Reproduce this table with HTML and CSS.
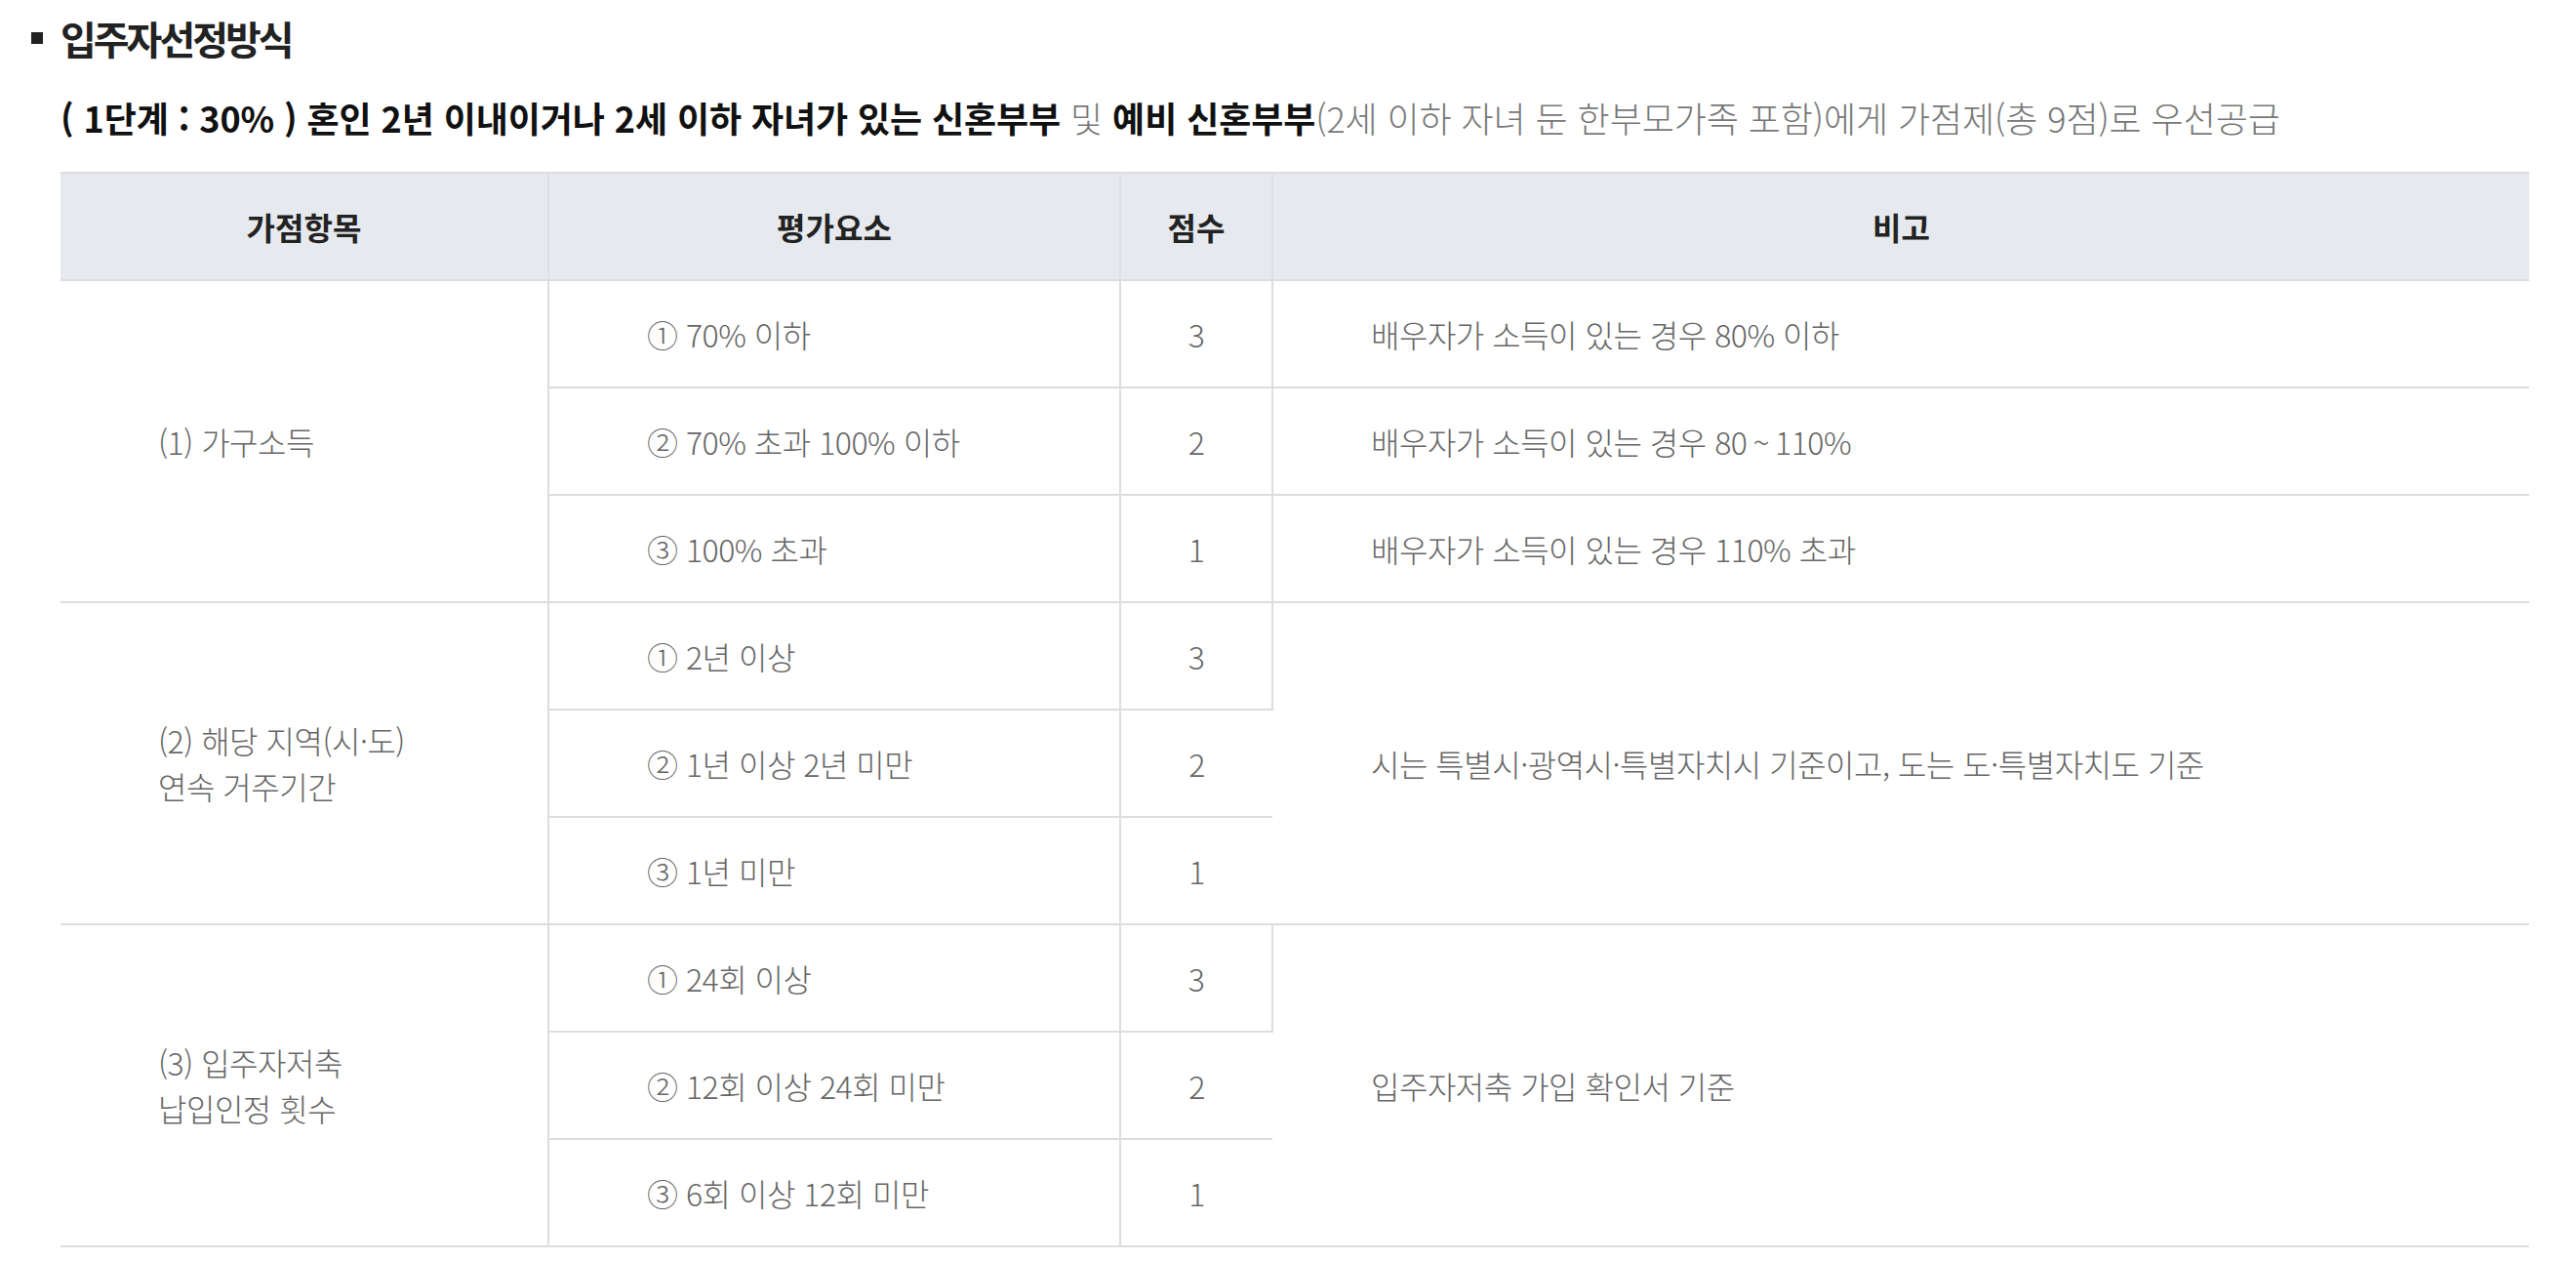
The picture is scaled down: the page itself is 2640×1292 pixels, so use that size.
FILE: index.html
```html
<!DOCTYPE html>
<html lang="ko">
<head>
<meta charset="utf-8">
<title>입주자선정방식</title>
<link rel="stylesheet" href="styles.css">
</head>
<body>
<div class="wrap">
  <h2 class="title"><span class="bullet"></span>입주자선정방식</h2>
  <div class="content">
    <p class="lead"><strong>( 1단계 : 30% ) 혼인 2년 이내이거나 2세 이하 자녀가 있는 신혼부부</strong> 및 <strong>예비 신혼부부</strong>(2세 이하 자녀 둔 한부모가족 포함)에게 가점제(총 9점)로 우선공급</p>
    <table class="score">
      <colgroup>
        <col class="c1"><col class="c2"><col class="c3"><col class="c4">
      </colgroup>
      <thead>
        <tr><th>가점항목</th><th>평가요소</th><th>점수</th><th>비고</th></tr>
      </thead>
      <tbody>
        <tr class="grp"><td rowspan="3" class="item">(1) 가구소득</td><td>① 70% 이하</td><td class="pt">3</td><td>배우자가 소득이 있는 경우 80% 이하</td></tr>
        <tr><td>② 70% 초과 100% 이하</td><td class="pt">2</td><td>배우자가 소득이 있는 경우 80<span class="tilde">~</span>110%</td></tr>
        <tr><td>③ 100% 초과</td><td class="pt">1</td><td>배우자가 소득이 있는 경우 110% 초과</td></tr>
        <tr class="grp"><td rowspan="3" class="item">(2) 해당 지역(시·도)<br>연속 거주기간</td><td>① 2년 이상</td><td class="pt">3</td><td rowspan="3">시는 특별시·광역시·특별자치시 기준이고, 도는 도·특별자치도 기준</td></tr>
        <tr><td>② 1년 이상 2년 미만</td><td class="pt">2</td></tr>
        <tr><td>③ 1년 미만</td><td class="pt">1</td></tr>
        <tr class="grp"><td rowspan="3" class="item">(3) 입주자저축<br>납입인정 횟수</td><td>① 24회 이상</td><td class="pt">3</td><td rowspan="3">입주자저축 가입 확인서 기준</td></tr>
        <tr><td>② 12회 이상 24회 미만</td><td class="pt">2</td></tr>
        <tr><td>③ 6회 이상 12회 미만</td><td class="pt">1</td></tr>
      </tbody>
    </table>
  </div>
</div>
</body>
</html>
```

FILE: styles.css
```css
html, body {
  margin: 0;
  padding: 0;
  background: #fff;
}
body {
  font-family: "Noto Sans CJK KR", "Noto Sans", sans-serif;
  color: #666;
}
.wrap {
  padding: 15px 0 0 32px;
}
.title {
  display: flex;
  align-items: center;
  gap: 18px;
  margin: 0;
  font-size: 40px;
  line-height: 48px;
  font-weight: 700;
  color: #222;
  letter-spacing: -3px;
}
.bullet {
  width: 12px;
  height: 12px;
  background: #222;
  flex: none;
}
.content {
  padding-left: 30px;
}
.lead {
  margin: 33px 0 32px;
  font-size: 36px;
  line-height: 48px;
  color: #777;
  font-weight: 300;
  letter-spacing: -0.1px;
}
.lead strong {
  color: #111;
  font-weight: 700;
}
.score {
  width: 2530px;
  border-collapse: collapse;
  table-layout: fixed;
  border-top: 2px solid #ddd;
}
.c1 { width: 500px; }
.c2 { width: 586px; }
.c3 { width: 156px; }
.c4 { width: 1288px; }
.score th {
  height: 108px;
  padding: 0;
  background: #e6e9ed;
  color: #222;
  font-size: 32px;
  font-weight: 700;
  text-align: center;
  border-right: 2px solid #dde0e4;
  border-bottom: 2px solid #ddd;
  letter-spacing: 0;
}
.score th:last-child { border-right: 0; }
.score td {
  height: 108px;
  padding: 0 0 0 100px;
  font-size: 32px;
  line-height: 47px;
  font-weight: 300;
  color: #666;
  border-right: 2px solid #ddd;
  border-bottom: 2px solid #ddd;
  letter-spacing: -0.5px;
  vertical-align: middle;
}
.score td:last-child { border-right: 0; }
.score td.pt {
  padding: 0;
  text-align: center;
}
.tilde {
  margin: 0 6px;
}
```
